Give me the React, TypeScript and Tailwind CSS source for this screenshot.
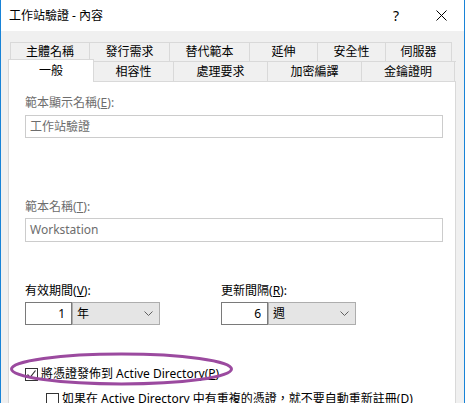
// Certificate template properties dialog
const font = "font-['Segoe_UI','Noto_Sans','Noto_Sans_CJK_TC',sans-serif]";

function Chevron() {
  return (
    <svg width="9" height="5" viewBox="0 0 9 5" className="text-[#606060]">
      <path d="M0.5 0.5 L4.5 4.5 L8.5 0.5" fill="none" stroke="currentColor" strokeWidth="1" />
    </svg>
  );
}

function Check({ checked }: { checked?: boolean }) {
  return (
    <div className="w-[13px] h-[13px] border border-[#333333] bg-white flex items-center justify-center shrink-0">
      {checked && (
        <svg width="11" height="11" viewBox="0 0 11 11">
          <path d="M1.5 5.5 L4 8.5 L9.5 1.5" fill="none" stroke="#333333" strokeWidth="1.2" />
        </svg>
      )}
    </div>
  );
}

function Period({ label, acc, rest, value, unit }: { label: string; acc: string; rest: string; value: string; unit: string }) {
  return (
    <div className="flex flex-col w-[135px]">
      <div className="h-4 leading-4 text-[12px] text-black">
        {label}(<u>{acc}</u>){rest}
      </div>
      <div className="flex mt-[3px] h-[23px]">
        <div className="w-[47px] border border-[#7a7a7a] bg-white flex items-center justify-end pr-[6px] text-[12px]">{value}</div>
        <div className="w-[88px] border border-[#adadad] bg-[#e5e5e5] flex items-center justify-between pl-[4px] pr-[6px] text-[12px]">
          <span>{unit}</span>
          <Chevron />
        </div>
      </div>
    </div>
  );
}

export default function App() {
  const row1 = [
    ["主體名稱", "w-[80px]"],
    ["發行需求", "w-[80px]"],
    ["替代範本", "w-[80px]"],
    ["延伸", "w-[68px]"],
    ["安全性", "w-[68px]"],
    ["伺服器", "w-[66px]"],
  ];
  const row2 = [
    ["相容性", "w-[80px]"],
    ["處理要求", "w-[94px]"],
    ["加密編譯", "w-[94px]"],
    ["金鑰證明", "w-[93px]"],
  ];

  return (
    <div className={`${font} relative w-[465px] h-[403px] overflow-hidden bg-[#f0f0f0] border-l border-r border-[#1883d7] text-black`}>
      {/* title bar */}
      <div className="h-[31px] bg-white flex items-center pl-[8px] pr-[17px]">
        <span className="text-[12px] flex-1">工作站驗證 - 內容</span>
        <span className="text-[14px] w-[12px] text-center mr-[34px]">?</span>
        <svg width="11" height="11" viewBox="0 0 11 11">
          <path d="M0.5 0.5 L10.5 10.5 M10.5 0.5 L0.5 10.5" stroke="#000" strokeWidth="1" />
        </svg>
      </div>

      {/* tabs */}
      <div className="flex ml-[9px] mt-[11px] h-[19px]">
        {row1.map(([t, w], i) => (
          <div
            key={t}
            className={`${w} border-t border-r border-[#d9d9d9] ${i === 0 ? "border-l" : ""} flex items-center justify-center text-[12px]`}
          >
            {t}
          </div>
        ))}
      </div>
      <div className="flex ml-[7px] h-[20px] border-t border-[#d9d9d9] w-[448px]">
        <div className="relative z-10 w-[86px] h-[23px] -mt-[3px] bg-white border-t border-l border-r border-[#d9d9d9] flex items-start justify-center pt-[2px] text-[12px]">
          一般
        </div>
        {row2.map(([t, w]) => (
          <div key={t} className={`${w} border-r border-[#d9d9d9] flex items-center justify-center text-[12px]`}>
            {t}
          </div>
        ))}
      </div>

      {/* panel */}
      <div className="ml-[7px] w-[448px] h-[330px] bg-white border border-[#d9d9d9] pl-[16px] pt-[13px]">
        <div className="h-4 leading-4 text-[12px] text-[#6d6d6d]">
          範本顯示名稱(<u>E</u>):
        </div>
        <div className="mt-[4px] w-[418px] h-[23px] border border-[#cccccc] flex items-center pl-[4px] text-[12px] text-[#6d6d6d]">
          工作站驗證
        </div>

        <div className="mt-[61px] h-4 leading-4 text-[12px] text-[#6d6d6d]">
          範本名稱(<u>T</u>):
        </div>
        <div className="mt-[3px] w-[418px] h-[24px] border border-[#cccccc] flex items-center pl-[4px] text-[12px] text-[#6d6d6d]">
          Workstation
        </div>

        <div className="mt-[41px] flex gap-[61px]">
          <Period label="有效期間" acc="V" rest=":" value="1" unit="年" />
          <Period label="更新間隔" acc="R" rest=":" value="6" unit="週" />
        </div>

        <div className="mt-[41px] flex items-center gap-[3px] h-4 text-[12px]">
          <Check checked />
          <span>
            將憑證發佈到 Active Directory(<u>P</u>)
          </span>
        </div>
        <div className="mt-[9px] ml-[21px] flex items-center gap-[3px] h-4 text-[12px]">
          <Check />
          <span>
            如果在 Active Directory 中有重複的憑證，就不要自動重新註冊(<u>D</u>)
          </span>
        </div>
      </div>

      {/* purple highlight ellipse */}
      <svg className="absolute left-0 top-0 pointer-events-none" width="465" height="403">
        <ellipse cx="120.5" cy="369" rx="110" ry="15" fill="none" stroke="#9b4a9f" strokeWidth="3" />
      </svg>
    </div>
  );
}
